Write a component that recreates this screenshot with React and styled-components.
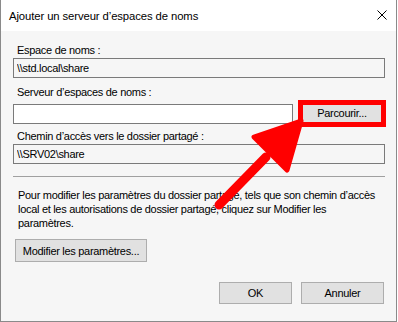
import React from 'react';
import styled, { createGlobalStyle } from 'styled-components';

const GlobalStyle = createGlobalStyle`
  html, body {
    margin: 0;
    padding: 0;
    background: #ffffff;
  }
  * {
    box-sizing: border-box;
  }
`;

const App = () => {
  return (
    <Page>
      <GlobalStyle />
      <Window>
        <TitleBar>
          <Title>Ajouter un serveur d’espaces de noms</Title>
          <CloseIcon viewBox="0 0 10 10">
            <path d="M0.5 0.5 L9.5 9.5 M9.5 0.5 L0.5 9.5" stroke="#000" strokeWidth="1" />
          </CloseIcon>
        </TitleBar>

        <Body>
          <Label>Espace de noms :</Label>
          <TextBox readOnly value="\\std.local\share" />

          <Label $top={8}>Serveur d’espaces de noms :</Label>
          <FieldRow>
            <TextBox $editable value="" readOnly />
            <BrowseButton>Parcourir...</BrowseButton>
          </FieldRow>

          <Label $top={3}>Chemin d’accès vers le dossier partagé :</Label>
          <TextBox readOnly value="\\SRV02\share" />

          <Separator />

          <Hint>
            Pour modifier les paramètres du dossier partagé, tels que son chemin d’accès
            <br />
            local et les autorisations de dossier partagé, cliquez sur Modifier les
            <br />
            paramètres.
          </Hint>

          <SettingsButton>Modifier les paramètres...</SettingsButton>

          <Footer>
            <DialogButton $width={73}>OK</DialogButton>
            <DialogButton $width={83}>Annuler</DialogButton>
          </Footer>
        </Body>
      </Window>

      {/* annotation arrow drawn over the dialog */}
      <Arrow viewBox="0 0 398 322">
        <line x1="219" y1="205" x2="266" y2="157" stroke="#ff0000" strokeWidth="9" strokeLinecap="round" />
        <polygon
          points="301,121 254,137 287,170"
          fill="#ff0000"
          stroke="#ff0000"
          strokeWidth="5"
          strokeLinejoin="round"
        />
      </Arrow>
    </Page>
  );
};

export default App;

const Page = styled.div`
  position: relative;
  width: 398px;
  height: 322px;
  font-family: "Liberation Sans", Arial, sans-serif;
  color: #000;
`;

const Window = styled.div`
  width: 397px;
  height: 322px;
  display: flex;
  flex-direction: column;
  border: 1px solid #8a8a8a;
  border-top: none;
  background: #f6f6f6;
`;

const TitleBar = styled.div`
  height: 31px;
  flex: none;
  display: flex;
  align-items: center;
  justify-content: space-between;
  background: #ffffff;
  padding: 0 9px 0 8px;
`;

const Title = styled.div`
  font-size: 11.3px;
  letter-spacing: -0.1px;
  margin-top: 1px;
`;

const CloseIcon = styled.svg`
  width: 10px;
  height: 10px;
  margin-top: -2px;
`;

const Body = styled.div`
  flex: 1;
  display: flex;
  flex-direction: column;
  padding: 13px 11px 17px 12px;
  font-size: 11px;
  letter-spacing: -0.3px;
`;

const Label = styled.div`
  height: 13px;
  line-height: 13px;
  margin: ${(p) => p.$top || 0}px 0 1px 4px;
`;

const FieldRow = styled.div`
  display: flex;
  align-items: center;
  justify-content: space-between;
  height: 27px;
`;

const TextBox = styled.input`
  width: ${(p) => (p.$editable ? '280px' : '100%')};
  height: 20px;
  border: 1px solid #7a7a7a;
  background: ${(p) => (p.$editable ? '#ffffff' : '#f6f6f6')};
  font: inherit;
  letter-spacing: inherit;
  color: #000;
  padding: 0 0 0 3px;
  outline: none;
`;

const Button = styled.button`
  font: inherit;
  letter-spacing: inherit;
  color: #000;
  background: #e1e1e1;
  border: 1px solid #adadad;
  padding: 0;
`;

const BrowseButton = styled(Button)`
  width: 88px;
  height: 27px;
  margin-right: -1px;
  border: 5px solid #ff0000;
  padding-bottom: 1px;
`;

const Separator = styled.div`
  height: 1px;
  background: #a0a0a0;
  margin: 12px 0 11px;
`;

const Hint = styled.div`
  line-height: 14px;
  padding-left: 5px;
  white-space: nowrap;
`;

const SettingsButton = styled(Button)`
  align-self: flex-start;
  width: 132px;
  height: 23px;
  margin: 9px 0 0 2px;
`;

const Footer = styled.div`
  margin-top: auto;
  display: flex;
  justify-content: flex-end;
  gap: 9px;
  padding-right: 1px;
`;

const DialogButton = styled(Button)`
  width: ${(p) => p.$width}px;
  height: 22px;
`;

const Arrow = styled.svg`
  position: absolute;
  top: 0;
  left: 0;
  width: 398px;
  height: 322px;
  pointer-events: none;
`;
